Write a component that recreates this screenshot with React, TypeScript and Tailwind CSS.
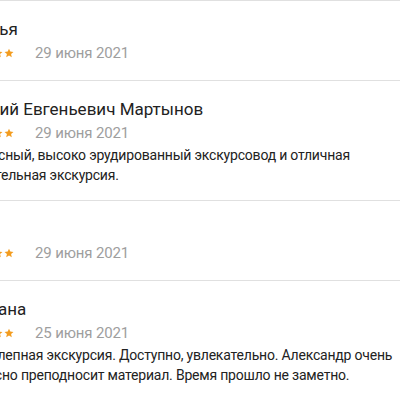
const reviews = [
    {name: "Наталья", date: "29 июня 2021", text: ""},
    {name: "Василий Евгеньевич Мартынов", date: "29 июня 2021", text: "Прекрасный, высоко эрудированный экскурсовод и отличная увлекательная экскурсия."},
    {name: "Ольга", date: "29 июня 2021", text: ""},
    {name: "Светлана", date: "25 июня 2021", text: "Великолепная экскурсия. Доступно, увлекательно. Александр очень интересно преподносит материал. Время прошло не заметно."},
];

const Star = () => (
    <svg width="10" height="10" viewBox="0 0 24 24" fill="#f39c1f">
        <path d="M12 1.5l3.1 7.1 7.7.7-5.8 5.1 1.7 7.6L12 18l-6.7 4 1.7-7.6-5.8-5.1 7.7-.7z"/>
    </svg>
);

const App = () => {
    return (
        <div className="w-[400px] h-[400px] overflow-hidden bg-white" style={{fontFamily: "Roboto, 'Noto Sans', sans-serif"}}>
            <div className="-ml-[49px] w-[520px]">
                {reviews.map((r, i) => (
                    <div key={i} className="border-t border-[#e0e0e0] pt-4 pb-[15px]">
                        <div className="text-[17px] leading-6 text-[#222]">{r.name}</div>
                        <div className="flex items-center h-6">
                            <div className="flex gap-[1px] ml-[9px]">
                                <Star/><Star/><Star/><Star/><Star/>
                            </div>
                            <span className="ml-[21px] text-[15px] tracking-[-0.15px] text-[#9e9e9e]">{r.date}</span>
                        </div>
                        {r.text && (
                            <p className="w-[448px] text-[14px] tracking-[-0.2px] leading-5 text-[#222]">{r.text}</p>
                        )}
                    </div>
                ))}
                <div className="border-t border-[#e0e0e0]"/>
            </div>
        </div>
    );
}

export default App;
